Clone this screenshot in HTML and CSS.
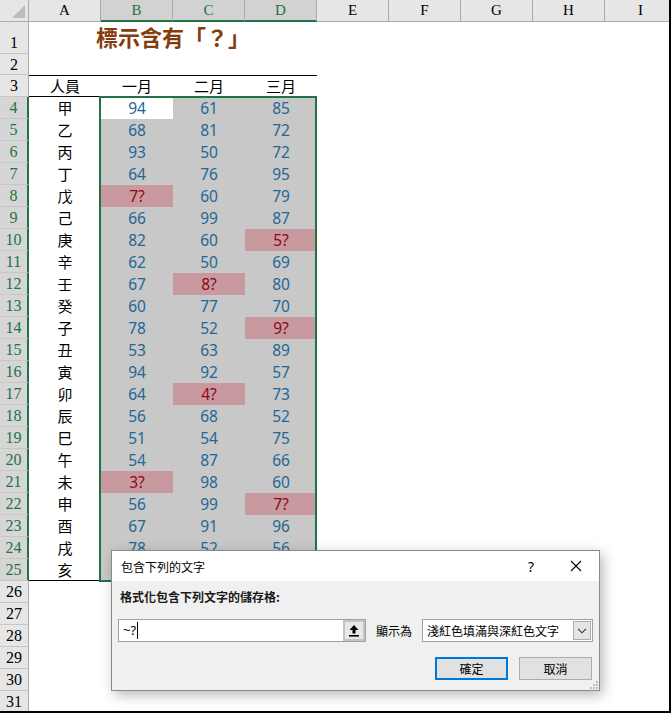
FILE: index.html
```html
<!DOCTYPE html>
<html lang="zh-Hant">
<head>
<meta charset="utf-8">
<title>標示含有「?」</title>
<link rel="stylesheet" href="styles.css">
</head>
<body>
<div class="sheet">
  <div class="colhead">
    <div class="corner"><svg width="28" height="21" viewBox="0 0 28 21"><polygon points="25,5 25,18 12,18" fill="#bcbcbc"/></svg></div>
    <div class="ch">A</div><div class="ch sel">B</div><div class="ch sel">C</div><div class="ch sel">D</div>
    <div class="ch">E</div><div class="ch">F</div><div class="ch">G</div><div class="ch">H</div><div class="ch">I</div>
  </div>
  <div class="row r1"><div class="rh">1</div><div class="title">標示含有「？」</div></div>
  <div class="row r2"><div class="rh">2</div></div>
  <div class="row r3"><div class="rh">3</div><div class="c hd hda">人員</div><div class="c hd">一月</div><div class="c hd">二月</div><div class="c hd">三月</div></div>

  <div class="row"><div class="rh sel">4</div><div class="c nm">甲</div><div class="c n act">94</div><div class="c n g">61</div><div class="c n g">85</div></div>
  <div class="row"><div class="rh sel">5</div><div class="c nm">乙</div><div class="c n g">68</div><div class="c n g">81</div><div class="c n g">72</div></div>
  <div class="row"><div class="rh sel">6</div><div class="c nm">丙</div><div class="c n g">93</div><div class="c n g">50</div><div class="c n g">72</div></div>
  <div class="row"><div class="rh sel">7</div><div class="c nm">丁</div><div class="c n g">64</div><div class="c n g">76</div><div class="c n g">95</div></div>
  <div class="row"><div class="rh sel">8</div><div class="c nm">戊</div><div class="c rd">7?</div><div class="c n g">60</div><div class="c n g">79</div></div>
  <div class="row"><div class="rh sel">9</div><div class="c nm">己</div><div class="c n g">66</div><div class="c n g">99</div><div class="c n g">87</div></div>
  <div class="row"><div class="rh sel">10</div><div class="c nm">庚</div><div class="c n g">82</div><div class="c n g">60</div><div class="c rd">5?</div></div>
  <div class="row"><div class="rh sel">11</div><div class="c nm">辛</div><div class="c n g">62</div><div class="c n g">50</div><div class="c n g">69</div></div>
  <div class="row"><div class="rh sel">12</div><div class="c nm">壬</div><div class="c n g">67</div><div class="c rd">8?</div><div class="c n g">80</div></div>
  <div class="row"><div class="rh sel">13</div><div class="c nm">癸</div><div class="c n g">60</div><div class="c n g">77</div><div class="c n g">70</div></div>
  <div class="row"><div class="rh sel">14</div><div class="c nm">子</div><div class="c n g">78</div><div class="c n g">52</div><div class="c rd">9?</div></div>
  <div class="row"><div class="rh sel">15</div><div class="c nm">丑</div><div class="c n g">53</div><div class="c n g">63</div><div class="c n g">89</div></div>
  <div class="row"><div class="rh sel">16</div><div class="c nm">寅</div><div class="c n g">94</div><div class="c n g">92</div><div class="c n g">57</div></div>
  <div class="row"><div class="rh sel">17</div><div class="c nm">卯</div><div class="c n g">64</div><div class="c rd">4?</div><div class="c n g">73</div></div>
  <div class="row"><div class="rh sel">18</div><div class="c nm">辰</div><div class="c n g">56</div><div class="c n g">68</div><div class="c n g">52</div></div>
  <div class="row"><div class="rh sel">19</div><div class="c nm">巳</div><div class="c n g">51</div><div class="c n g">54</div><div class="c n g">75</div></div>
  <div class="row"><div class="rh sel">20</div><div class="c nm">午</div><div class="c n g">54</div><div class="c n g">87</div><div class="c n g">66</div></div>
  <div class="row"><div class="rh sel">21</div><div class="c nm">未</div><div class="c rd">3?</div><div class="c n g">98</div><div class="c n g">60</div></div>
  <div class="row"><div class="rh sel">22</div><div class="c nm">申</div><div class="c n g">56</div><div class="c n g">99</div><div class="c rd">7?</div></div>
  <div class="row"><div class="rh sel">23</div><div class="c nm">酉</div><div class="c n g">67</div><div class="c n g">91</div><div class="c n g">96</div></div>
  <div class="row"><div class="rh sel">24</div><div class="c nm">戌</div><div class="c n g">78</div><div class="c n g">52</div><div class="c n g">56</div></div>
  <div class="row"><div class="rh sel">25</div><div class="c nm last">亥</div><div class="c n g"></div><div class="c n g"></div><div class="c n g"></div></div>

  <div class="row"><div class="rh">26</div></div>
  <div class="row"><div class="rh">27</div></div>
  <div class="row"><div class="rh">28</div></div>
  <div class="row"><div class="rh">29</div></div>
  <div class="row"><div class="rh">30</div></div>
  <div class="row"><div class="rh">31</div></div>

  <div class="selbox"></div>

  <div class="dlg">
    <div class="dlg-title">
      <span class="dlg-name">包含下列的文字</span>
      <span class="tb-btn tb-help">?</span>
      <span class="tb-btn tb-close"><svg width="12" height="12" viewBox="0 0 12 12"><path d="M1 1 L11 11 M11 1 L1 11" stroke="#000" stroke-width="1.1" fill="none"/></svg></span>
    </div>
    <div class="dlg-body">
      <div class="dlg-label">格式化包含下列文字的儲存格:</div>
      <div class="dlg-row">
        <div class="inp">
          <div class="inp-text">~?<span class="caret"></span></div>
          <div class="upbtn"><svg width="12" height="13" viewBox="0 0 12 13"><path d="M6 1 L10.5 6 L7.5 6 L7.5 9.5 L4.5 9.5 L4.5 6 L1.5 6 Z" fill="#000"/><rect x="1" y="11" width="10" height="1.6" fill="#000"/></svg></div>
        </div>
        <span class="show-as">顯示為</span>
        <div class="combo">
          <span class="combo-text">淺紅色填滿與深紅色文字</span>
          <span class="combo-btn"><svg width="10" height="6" viewBox="0 0 10 6"><path d="M1 0.8 L5 4.8 L9 0.8" stroke="#333" stroke-width="1.1" fill="none"/></svg></span>
        </div>
      </div>
      <div class="dlg-btns">
        <div class="btn btn-ok">確定</div>
        <div class="btn">取消</div>
      </div>
    </div>
    <svg class="grip" width="9" height="9" viewBox="0 0 9 9"><rect x="7" y="1" width="2" height="2" fill="#bdbdbd"/><rect x="4" y="4" width="2" height="2" fill="#bdbdbd"/><rect x="7" y="4" width="2" height="2" fill="#bdbdbd"/><rect x="1" y="7" width="2" height="2" fill="#bdbdbd"/><rect x="4" y="7" width="2" height="2" fill="#bdbdbd"/><rect x="7" y="7" width="2" height="2" fill="#bdbdbd"/></svg>
  </div>
</div>
</body>
</html>
```

FILE: styles.css
```css
* { box-sizing: border-box; }
html, body { margin: 0; padding: 0; background: #fff; }
body {
  overflow: hidden;
  font-family: "Noto Sans", "Noto Sans CJK TC", sans-serif;
  color: #000;
}
.sheet {
  position: relative;
  width: 671px;
  height: 713px;
  overflow: hidden;
  border-right: 2px solid #000;
  border-bottom: 2px solid #000;
  background: #fff;
}
.colhead {
  display: flex;
  height: 22px;
}
.corner {
  width: 29px;
  flex: none;
  background: #e6e6e6;
  border-right: 1px solid #ababab;
  border-bottom: 1px solid #ababab;
}
.corner svg { display: block; }
.ch {
  width: 72px;
  flex: none;
  background: #e6e6e6;
  border-right: 1px solid #ababab;
  border-bottom: 1px solid #ababab;
  font: 15px "Liberation Serif", serif;
  line-height: 21px;
  text-align: center;
  color: #000;
}
.ch.sel {
  background: #d2d2d2;
  color: #217346;
  border-bottom: 2px solid #217346;
}
.row {
  display: flex;
  height: 22px;
}
.row.r1 { height: 32px; }
.row.r2 { height: 21px; }
.rh {
  width: 29px;
  flex: none;
  background: #e6e6e6;
  border-right: 1px solid #ababab;
  border-bottom: 1px solid #c6c6c6;
  font: 16px "Liberation Serif", serif;
  line-height: 22px;
  text-align: center;
  color: #000;
}
.r1 .rh { line-height: 42px; }
.rh.sel {
  background: #d6d6d6;
  color: #217346;
  border-right: 2px solid #217346;
}
.title {
  width: 288px;
  flex: none;
  text-align: center;
  font-family: "Noto Sans CJK TC", sans-serif;
  font-weight: 700;
  font-size: 22px;
  line-height: 28px;
  color: #843c0c;
}
.c {
  width: 72px;
  flex: none;
  text-align: center;
  font-size: 15.5px;
  line-height: 22px;
}
.hd {
  border-top: 1px solid #000;
  line-height: 20px;
  font-family: "Noto Sans CJK TC", sans-serif;
  font-size: 15px;
}
.hda { border-bottom: 1px solid #000; }
.nm {
  font-family: "Noto Sans CJK TC", sans-serif;
  font-size: 15px;
  line-height: 21px;
}
.nm.last { border-bottom: 1px solid #000; }
.n { color: #1e6796; }
.g { background: #c8c8c8; }
.act { background: #fff; }
.rd {
  background: #c8999e;
  color: #8c0a16;
}
.selbox {
  position: absolute;
  left: 99px;
  top: 96px;
  width: 218px;
  height: 486px;
  border: 2px solid #217346;
}

/* dialog */
.dlg {
  position: absolute;
  left: 111px;
  top: 550px;
  width: 489px;
  height: 141px;
  border: 1px solid #8a8a8a;
  background: #f0f0f0;
  box-shadow: 3px 4px 12px rgba(0, 0, 0, 0.28);
  font-family: "Noto Sans CJK TC", sans-serif;
  font-size: 12px;
  color: #000;
}
.dlg-title {
  height: 30px;
  background: #fff;
  display: flex;
  align-items: center;
  padding-left: 9px;
}
.dlg-name { flex: 1; }
.tb-btn {
  width: 46px;
  height: 30px;
  display: flex;
  align-items: center;
  justify-content: center;
  font-family: "Noto Sans", sans-serif;
  font-size: 14px;
}
.tb-help { padding-left: 2px; }
.tb-close svg { display: block; }
.dlg-body {
  padding: 8px 6px 0 6px;
}
.dlg-label {
  padding-left: 2px;
  line-height: 16px;
  height: 16px;
  margin-bottom: 14px;
  font-weight: 700;
  color: #1a1a1a;
}
.dlg-row {
  display: flex;
  align-items: center;
  height: 23px;
}
.inp {
  width: 248px;
  height: 23px;
  border: 1px solid #a0a0a0;
  background: #fff;
  display: flex;
}
.inp-text {
  flex: 1;
  padding-left: 4px;
  line-height: 21px;
  font-family: "Noto Sans", sans-serif;
  font-size: 13px;
  display: flex;
  align-items: center;
}
.caret {
  display: inline-block;
  width: 1px;
  height: 17px;
  background: #000;
  margin-left: 1px;
}
.upbtn {
  width: 22px;
  flex: none;
  border: 2px solid #c4c4c4;
  background: #e8e8e8;
  display: flex;
  align-items: center;
  justify-content: center;
}
.upbtn svg { display: block; }
.show-as {
  margin-left: 10px;
  width: 36px;
  color: #000;
}
.combo {
  margin-left: 10px;
  width: 171px;
  height: 23px;
  border: 1px solid #a0a0a0;
  background: #fff;
  display: flex;
  align-items: center;
  padding-left: 4px;
  padding-right: 1px;
}
.combo-text { flex: 1; }
.combo-btn {
  width: 18px;
  height: 19px;
  border: 1px solid #adadad;
  background: #e5e5e5;
  display: flex;
  align-items: center;
  justify-content: center;
}
.combo-btn svg { display: block; }
.dlg-btns {
  display: flex;
  justify-content: flex-end;
  gap: 11px;
  margin-top: 15px;
  padding-right: 1px;
}
.btn {
  width: 73px;
  height: 23px;
  border: 1px solid #adadad;
  background: #e1e1e1;
  text-align: center;
  line-height: 21px;
}
.btn-ok {
  border: 2px solid #0078d7;
  line-height: 19px;
}
.grip {
  position: absolute;
  right: 1px;
  bottom: 1px;
  display: block;
}
```
